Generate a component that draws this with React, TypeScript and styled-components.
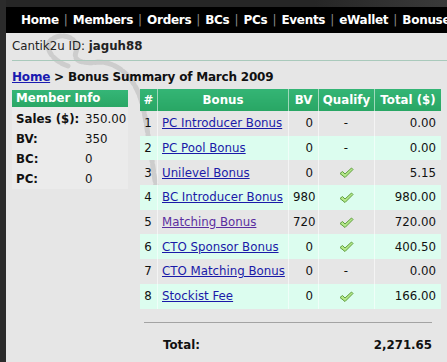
import React from 'react';
import styled, { createGlobalStyle } from 'styled-components';

const GlobalStyle = createGlobalStyle`
  html, body {
    margin: 0;
    padding: 0;
    background: #e5e5e5;
  }
  body {
    font-family: 'DejaVu Sans', Verdana, sans-serif;
    font-size: 11.8px;
    color: #111;
    overflow: hidden;
  }
`;

interface BonusRow {
  name: string;
  bv: number;
  qualify: boolean;
  total: string;
  visited?: boolean;
}

const bonuses: BonusRow[] = [
  { name: 'PC Introducer Bonus', bv: 0, qualify: false, total: '0.00' },
  { name: 'PC Pool Bonus', bv: 0, qualify: false, total: '0.00' },
  { name: 'Unilevel Bonus', bv: 0, qualify: true, total: '5.15' },
  { name: 'BC Introducer Bonus', bv: 980, qualify: true, total: '980.00' },
  { name: 'Matching Bonus', bv: 720, qualify: true, total: '720.00', visited: true },
  { name: 'CTO Sponsor Bonus', bv: 0, qualify: true, total: '400.50' },
  { name: 'CTO Matching Bonus', bv: 0, qualify: false, total: '0.00' },
  { name: 'Stockist Fee', bv: 0, qualify: true, total: '166.00' },
];

const navItems = ['Home', 'Members', 'Orders', 'BCs', 'PCs', 'Events', 'eWallet', 'Bonuses'];

const Page = styled.div`
  display: flex;
  width: 447px;
  height: 362px;
  overflow: hidden;
`;

const LeftStrip = styled.div`
  width: 6px;
  flex-shrink: 0;
  background: #2b2b2b;
`;

const Main = styled.div`
  flex: 1;
  display: flex;
  flex-direction: column;
  min-width: 0;
  position: relative;
  background: #e6e6e6;
`;

const TopStrip = styled.div`
  height: 7px;
  background: linear-gradient(to right, #262626 70%, #3a3a3a 100%);
`;

const NavBar = styled.nav`
  height: 26px;
  background: #000;
  display: flex;
  align-items: center;
  padding-left: 15px;
  white-space: nowrap;
  overflow: hidden;
`;

const NavLink = styled.span`
  color: #fff;
  font-family: 'DejaVu Sans', Verdana, sans-serif;
  font-weight: 700;
  font-size: 12px;
  letter-spacing: -0.3px;
  flex-shrink: 0;
`;

const NavSep = styled.span`
  color: #8a8a8a;
  font-size: 12px;
  margin: 0 5px;
  flex-shrink: 0;
`;

const Content = styled.div`
  padding: 6px 0 0 6px;
  position: relative;
  z-index: 1;
`;

const IdLine = styled.div`
  height: 15px;
  line-height: 15px;
  color: #222;
`;

const Divider = styled.div`
  margin-top: 6px;
  height: 1px;
  background: #a9c9bb;
`;

const Crumb = styled.div`
  margin-top: 7px;
  height: 18px;
  line-height: 18px;
  font-size: 12px;
  font-weight: 700;
  letter-spacing: -0.2px;
  color: #111;

  a {
    color: #1a1ab0;
    text-decoration: underline;
  }
`;

const Columns = styled.div`
  display: flex;
  align-items: flex-start;
  gap: 12px;
  margin-top: 3px;
`;

const InfoBox = styled.div`
  width: 116px;
  margin-top: 1px;
`;

const GreenHead = styled.div`
  height: 17px;
  line-height: 17px;
  background: linear-gradient(#35b677, #2aa765);
  color: #fff;
  font-weight: 700;
  padding-left: 4px;
`;

const InfoRows = styled.div`
  padding-top: 2px;
  background: rgba(236, 236, 236, 0.75);
`;

const InfoRow = styled.div`
  display: flex;
  height: 20px;
  line-height: 20px;
  padding-left: 4px;
`;

const InfoLabel = styled.span`
  width: 69px;
  font-weight: 700;
`;

const Summary = styled.div`
  width: 297px;
`;

const Table = styled.table`
  width: 297px;
  table-layout: fixed;
  border-collapse: collapse;
  font-size: 11.8px;
`;

const Th = styled.th<{ $w: number }>`
  width: ${(p) => p.$w}px;
  height: 22px;
  padding: 0;
  background: linear-gradient(#34b575, #29a664);
  color: #fff;
  font-weight: 700;
  text-align: center;
  white-space: nowrap;
  border-right: 1px solid #9fd8bb;
  &:last-child {
    border-right: 0;
  }
`;

const Tr = styled.tr<{ $alt: boolean }>`
  background: ${(p) => (p.$alt ? '#dcfdef' : 'transparent')};
`;

const Td = styled.td<{ $align?: string }>`
  height: 24.7px;
  padding: 0 5px 0 4px;
  text-align: ${(p) => p.$align || 'left'};
  border-right: 1px solid rgba(255, 255, 255, 0.55);
  white-space: nowrap;
  overflow: visible;
  &:last-child {
    border-right: 0;
  }

  a {
    color: #1a1aa8;
    text-decoration: underline;
  }
  a.visited {
    color: #5a2ea0;
  }
`;

const TotalRule = styled.div`
  margin: 13px 5px 0 4px;
  height: 1px;
  background: #a3a3a3;
`;

const TotalRow = styled.div`
  display: flex;
  justify-content: space-between;
  padding: 0 5px 0 23px;
  margin-top: 15px;
  font-weight: 700;
`;

const Watermark = styled.svg`
  position: absolute;
  left: 0;
  top: 0;
  z-index: 0;
  pointer-events: none;
`;

const Check = () => (
  <svg width="15" height="12" viewBox="0 0 15 12" style={{ verticalAlign: 'middle' }}>
    <path
      d="M1 6.5 L3.5 4.5 L6 7 L12.5 1 L14 2.5 L6 10.5 Z"
      fill="#b4e88a"
      stroke="#5f9e3e"
      strokeWidth="1"
      strokeLinejoin="round"
    />
  </svg>
);

export default function App() {
  return (
    <Page>
      <GlobalStyle />
      <LeftStrip />
      <Main>
        <TopStrip />
        <NavBar>
          {navItems.map((item, i) => (
            <React.Fragment key={item}>
              {i > 0 && <NavSep>|</NavSep>}
              <NavLink>{item}</NavLink>
            </React.Fragment>
          ))}
        </NavBar>
        <Watermark width="180" height="220" viewBox="0 0 180 220">
          <path
            d="M62 66 C44 60 36 44 48 38 C60 32 74 40 70 52 C66 62 80 64 92 62 C110 62 124 74 132 92 C140 110 142 140 146 160 C148 176 150 186 152 196"
            fill="none"
            stroke="#8c8c8c"
            strokeWidth="5"
            strokeDasharray="7 3"
            strokeLinecap="round"
            opacity="0.28"
          />
        </Watermark>
        <Content>
          <IdLine>
            Cantik2u ID: <b>jaguh88</b>
          </IdLine>
          <Divider />
          <Crumb>
            <a href="#">Home</a> &gt; Bonus Summary of March 2009
          </Crumb>
          <Columns>
            <InfoBox>
              <GreenHead>Member Info</GreenHead>
              <InfoRows>
                <InfoRow>
                  <InfoLabel>Sales ($):</InfoLabel>350.00
                </InfoRow>
                <InfoRow>
                  <InfoLabel>BV:</InfoLabel>350
                </InfoRow>
                <InfoRow>
                  <InfoLabel>BC:</InfoLabel>0
                </InfoRow>
                <InfoRow>
                  <InfoLabel>PC:</InfoLabel>0
                </InfoRow>
              </InfoRows>
            </InfoBox>
            <Summary>
              <Table>
                <thead>
                  <tr>
                    <Th $w={17}>#</Th>
                    <Th $w={130}>Bonus</Th>
                    <Th $w={29}>BV</Th>
                    <Th $w={55}>Qualify</Th>
                    <Th $w={66}>Total ($)</Th>
                  </tr>
                </thead>
                <tbody>
                  {bonuses.map((b, i) => (
                    <Tr key={b.name} $alt={i % 2 === 1}>
                      <Td $align="center">{i + 1}</Td>
                      <Td>
                        <a href="#" className={b.visited ? 'visited' : undefined}>
                          {b.name}
                        </a>
                      </Td>
                      <Td $align="right">{b.bv}</Td>
                      <Td $align="center">{b.qualify ? <Check /> : '-'}</Td>
                      <Td $align="right">{b.total}</Td>
                    </Tr>
                  ))}
                </tbody>
              </Table>
              <TotalRule />
              <TotalRow>
                <span>Total:</span>
                <span>2,271.65</span>
              </TotalRow>
            </Summary>
          </Columns>
        </Content>
      </Main>
    </Page>
  );
}
